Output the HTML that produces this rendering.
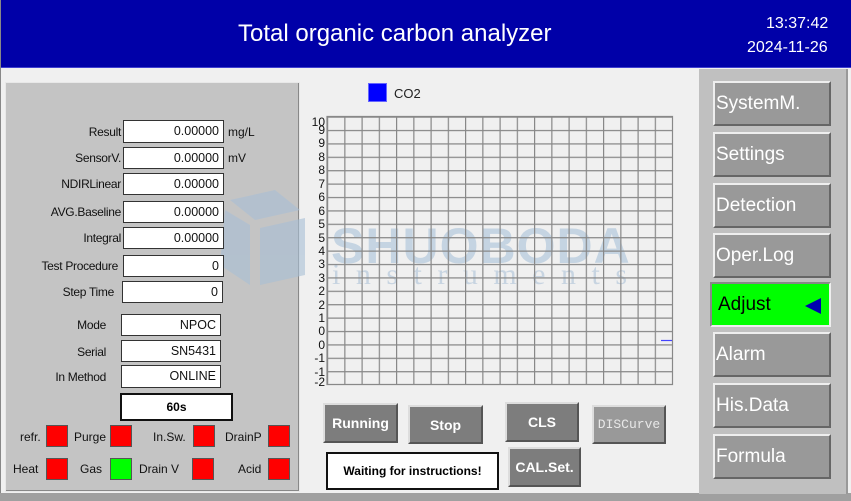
<!DOCTYPE html>
<html><head><meta charset="utf-8"><style>
*{margin:0;padding:0;box-sizing:border-box}
body{width:851px;height:501px;background:#f0f0f0;font-family:"Liberation Sans",Arial,sans-serif;position:relative;overflow:hidden}
.a{position:absolute}
.hdr{left:1px;top:0;width:850px;height:68px;background:#0000a8;color:#fff;border-bottom:1px solid #4040d0}
.lbl{position:absolute;font-size:12px;color:#111;text-align:right;width:120px;letter-spacing:-0.3px}
.fld{position:absolute;background:#fff;border:1px solid #333;font-size:12.5px;text-align:right;padding-right:4px;color:#111}
.sq{position:absolute;width:22px;border:1px solid #555;background:#f00}
.ind{position:absolute;font-size:12px;color:#111}
.btn{position:absolute;background:#7d7d7d;border:2px solid;border-color:#ddd #555 #555 #ddd;color:#fff;font-weight:bold;font-size:14px;text-align:center}
.rb{position:absolute;left:713px;width:118px;height:45px;background:#999;border:2px solid;border-color:#eee #666 #666 #eee;color:#fff;font-size:19px;line-height:41px;padding-left:1px}
</style></head><body>
<div class="a hdr"><div class="a" style="left:237px;top:20px;font-size:24px">Total organic carbon analyzer</div>
<div class="a" style="left:765px;top:15px;font-size:16px">13:37:42</div>
<div class="a" style="left:746px;top:39px;font-size:16px">2024-11-26</div></div>
<div class="a" style="left:0;top:0;width:1px;height:501px;background:#888"></div>
<div class="a" style="left:0;top:493px;width:851px;height:8px;background:#a0a0a0"></div>
<div class="a" style="left:5px;top:82px;width:295px;height:410px;border:1px solid #e8e8e8;background:#c4c4c4;box-shadow:inset -1px -1px 0 #888"></div>
<div class="a" style="left:699px;top:69px;width:149px;height:425px;background:#c0c0c0;border-right:2px solid #999"></div>
<!-- watermark -->
<svg class="a" style="left:205px;top:190px" width="110" height="100"><g fill="#a8bfd6" opacity=".6"><polygon points="25,10 70,0 95,20 50,30"/><polygon points="20,20 45,35 45,95 15,75"/><polygon points="55,38 100,28 100,85 55,95"/></g></svg>
<div class="a" style="left:331px;top:217px;font-size:50px;font-weight:bold;color:#a9c2d9;opacity:.6;letter-spacing:1px">SHUOBODA</div>
<div class="a" style="left:332px;top:258px;font-size:30px;font-family:'Liberation Serif',serif;color:#b7c9db;opacity:.7;letter-spacing:15.5px">instruments</div>
<!-- fields -->
<div class="lbl" style="left:1px;top:125px">Result</div><div class="fld" style="left:123px;top:120px;width:101px;height:23px;line-height:21px">0.00000</div><div class="ind" style="left:228px;top:125px">mg/L</div>
<div class="lbl" style="left:1px;top:151px">SensorV.</div><div class="fld" style="left:123px;top:147px;width:101px;height:22px;line-height:20px">0.00000</div><div class="ind" style="left:228px;top:151px">mV</div>
<div class="lbl" style="left:1px;top:177px">NDIRLinear</div><div class="fld" style="left:123px;top:173px;width:101px;height:22px;line-height:20px">0.00000</div>
<div class="lbl" style="left:1px;top:205px">AVG.Baseline</div><div class="fld" style="left:123px;top:201px;width:101px;height:22px;line-height:20px">0.00000</div>
<div class="lbl" style="left:1px;top:231px">Integral</div><div class="fld" style="left:123px;top:227px;width:101px;height:22px;line-height:20px">0.00000</div>
<div class="lbl" style="left:-2px;top:259px">Test Procedure</div><div class="fld" style="left:123px;top:255px;width:101px;height:22px;line-height:20px">0</div>
<div class="lbl" style="left:-6px;top:285px">Step Time</div><div class="fld" style="left:122px;top:281px;width:101px;height:22px;line-height:20px">0</div>
<div class="lbl" style="left:-14px;top:318px">Mode</div><div class="fld" style="left:121px;top:314px;width:100px;height:22px;line-height:20px">NPOC</div>
<div class="lbl" style="left:-14px;top:345px">Serial</div><div class="fld" style="left:121px;top:340px;width:100px;height:22px;line-height:20px">SN5431</div>
<div class="lbl" style="left:-14px;top:370px">In Method</div><div class="fld" style="left:121px;top:365px;width:100px;height:23px;line-height:21px">ONLINE</div>
<div class="a" style="left:120px;top:393px;width:113px;height:28px;background:#fff;border:2px solid #111;font-size:12px;font-weight:bold;text-align:center;line-height:24px">60s</div>
<div class="ind" style="left:20px;top:430px">refr.</div><div class="sq" style="left:46px;top:425px;height:22px"></div>
<div class="ind" style="left:74px;top:430px">Purge</div><div class="sq" style="left:110px;top:425px;height:22px"></div>
<div class="ind" style="left:153px;top:430px">In.Sw.</div><div class="sq" style="left:193px;top:425px;height:22px"></div>
<div class="ind" style="left:225px;top:430px">DrainP</div><div class="sq" style="left:268px;top:425px;height:22px"></div>
<div class="ind" style="left:13px;top:462px">Heat</div><div class="sq" style="left:46px;top:458px;height:22px"></div>
<div class="ind" style="left:80px;top:462px">Gas</div><div class="sq" style="left:110px;top:458px;height:22px;background:#0f0"></div>
<div class="ind" style="left:139px;top:462px">Drain V</div><div class="sq" style="left:192px;top:458px;height:22px"></div>
<div class="ind" style="left:238px;top:462px">Acid</div><div class="sq" style="left:268px;top:458px;height:22px"></div>
<!-- legend -->
<div class="a" style="left:368px;top:83px;width:19px;height:19px;background:#00f;border:1px solid #66f"></div>
<div class="a" style="left:394px;top:86px;font-size:13px;color:#222">CO2</div>
<!-- chart -->
<svg class="a" style="left:300px;top:110px" width="380" height="280" font-family="Liberation Sans" font-size="12">
<defs><pattern id="p" x="27" y="6.5" width="17.25" height="13.4" patternUnits="userSpaceOnUse"><path d="M0.6 0V13.4M0 0.6H17.25" stroke="#888" stroke-width="1.2" fill="none"/></pattern></defs>
<rect x="27" y="6" width="345.5" height="268.5" fill="url(#p)"/>
<path d="M27 6.5H372.5V274.5H27Z M27 274.5H372.5" stroke="#888" stroke-width="1.2" fill="none"/>
<line x1="361" x2="372" y1="230.5" y2="230.5" stroke="#44f" stroke-width="1.2"/>
<g fill="#111" text-anchor="end">
<text x="25" y="16">10</text><text x="25" y="24">9</text><text x="25" y="37">9</text><text x="25" y="51">8</text><text x="25" y="64">8</text><text x="25" y="78">7</text><text x="25" y="91">6</text><text x="25" y="105">6</text><text x="25" y="118">5</text><text x="25" y="132">5</text><text x="25" y="145">4</text><text x="25" y="158">3</text><text x="25" y="172">3</text><text x="25" y="185">2</text><text x="25" y="199">2</text><text x="25" y="212">1</text><text x="25" y="225">0</text><text x="25" y="239">0</text><text x="25" y="252">-1</text><text x="25" y="266">-1</text><text x="25" y="276">-2</text>
</g></svg>
<!-- buttons -->
<div class="btn" style="left:323px;top:403px;width:75px;height:40px;line-height:36px">Running</div>
<div class="btn" style="left:408px;top:405px;width:75px;height:39px;line-height:36px">Stop</div>
<div class="btn" style="left:505px;top:402px;width:74px;height:40px;line-height:36px">CLS</div>
<div class="btn" style="left:592px;top:405px;width:74px;height:39px;line-height:36px;font-weight:normal;font-family:'Liberation Mono',monospace;font-size:13px;color:#e8e8e8;background:#999">DISCurve</div>
<div class="btn" style="left:508px;top:447px;width:73px;height:40px;line-height:36px">CAL.Set.</div>
<div class="a" style="left:326px;top:452px;width:173px;height:38px;background:#fff;border:2px solid #111;font-size:12px;font-weight:bold;text-align:center;line-height:34px">Waiting for instructions!</div>
<!-- right -->
<div class="rb" style="top:81px">SystemM.</div>
<div class="rb" style="top:132px">Settings</div>
<div class="rb" style="top:183px">Detection</div>
<div class="rb" style="top:233px">Oper.Log</div>
<div class="rb" style="top:282px;left:710px;width:121px;background:#0f0;color:#000;padding-left:6px;border-color:#888 #eee #eee #888">Adjust
<svg class="a" style="left:92px;top:12px" width="20" height="20"><polygon points="1,10 17,2 17,18" fill="#0000b0"/></svg></div>
<div class="rb" style="top:332px">Alarm</div>
<div class="rb" style="top:383px">His.Data</div>
<div class="rb" style="top:434px">Formula</div>
</body></html>
